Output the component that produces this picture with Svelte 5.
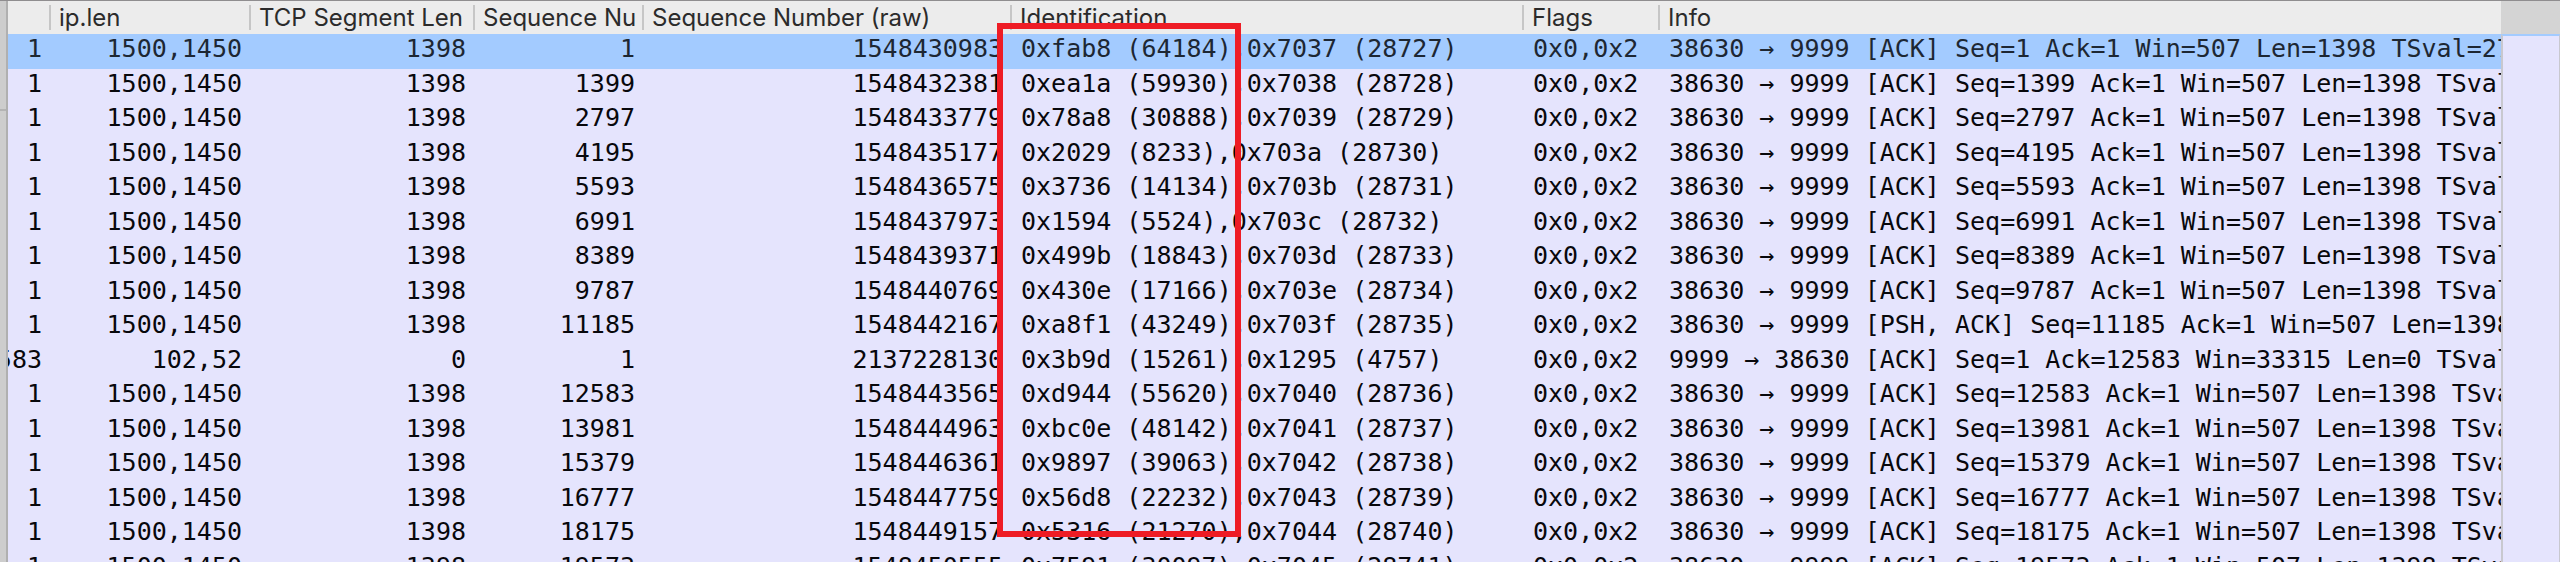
<script lang="ts">
  type Packet = {
    ack: string;
    len: string;
    seg: number;
    seq: number;
    raw: number;
    ident: string;
    info: string;
  };

  const columns = [
    { title: '', cls: 'ack' },
    { title: 'ip.len', cls: 'len' },
    { title: 'TCP Segment Len', cls: 'seg' },
    { title: 'Sequence Nu', cls: 'seq' },
    { title: 'Sequence Number (raw)', cls: 'raw' },
    { title: 'Identification', cls: 'ident' },
    { title: 'Flags', cls: 'flags' },
    { title: 'Info', cls: 'info' },
  ];

  function data(seq: number, ident: string, kind = 'ACK'): Packet {
    return {
      ack: '1',
      len: '1500,1450',
      seg: 1398,
      seq,
      raw: 1548430982 + seq,
      ident,
      info: `38630 → 9999 [${kind}] Seq=${seq} Ack=1 Win=507 Len=1398 TSval=27`,
    };
  }

  const packets: Packet[] = [
    data(1, '0xfab8 (64184),0x7037 (28727)'),
    data(1399, '0xea1a (59930),0x7038 (28728)'),
    data(2797, '0x78a8 (30888),0x7039 (28729)'),
    data(4195, '0x2029 (8233),0x703a (28730)'),
    data(5593, '0x3736 (14134),0x703b (28731)'),
    data(6991, '0x1594 (5524),0x703c (28732)'),
    data(8389, '0x499b (18843),0x703d (28733)'),
    data(9787, '0x430e (17166),0x703e (28734)'),
    data(11185, '0xa8f1 (43249),0x703f (28735)', 'PSH, ACK'),
    {
      ack: '12583',
      len: '102,52',
      seg: 0,
      seq: 1,
      raw: 2137228130,
      ident: '0x3b9d (15261),0x1295 (4757)',
      info: '9999 → 38630 [ACK] Seq=1 Ack=12583 Win=33315 Len=0 TSval=27',
    },
    data(12583, '0xd944 (55620),0x7040 (28736)'),
    data(13981, '0xbc0e (48142),0x7041 (28737)'),
    data(15379, '0x9897 (39063),0x7042 (28738)'),
    data(16777, '0x56d8 (22232),0x7043 (28739)'),
    data(18175, '0x5316 (21270),0x7044 (28740)'),
    data(19573, '0x7591 (30097),0x7045 (28741)'),
  ];

  let selected = $state(0);
</script>

<main class="window">
  <div class="edge"></div>

  <div class="list">
    <table>
      <colgroup>
        {#each columns as col}
          <col class={col.cls} />
        {/each}
      </colgroup>
      <thead>
        <tr>
          {#each columns as col}
            <th scope="col"><div class="title">{col.title}</div></th>
          {/each}
        </tr>
      </thead>
      <tbody>
        {#each packets as p, i}
          <tr class:selected={selected === i} onclick={() => (selected = i)}>
            <td><div class="cell num">{p.ack}</div></td>
            <td><div class="cell num">{p.len}</div></td>
            <td><div class="cell num">{p.seg}</div></td>
            <td><div class="cell num">{p.seq}</div></td>
            <td><div class="cell num">{p.raw}</div></td>
            <td><div class="cell">{p.ident}</div></td>
            <td><div class="cell">0x0,0x2</div></td>
            <td><div class="cell">{p.info}</div></td>
          </tr>
        {/each}
      </tbody>
    </table>
    <div class="marker"></div>
  </div>

  <div class="minimap">
    <div class="minimap-head"></div>
    <div class="minimap-body"></div>
  </div>
</main>

<style>
  :global(body) { margin: 0; }

  .window {
    display: flex;
    box-sizing: border-box;
    height: 100vh;
    overflow: hidden;
    border-top: 1px solid #8f8d8f;
    background: #e5e4fd;
  }

  .edge {
    box-sizing: border-box;
    flex: 0 0 8px;
    border-right: 2px solid #b0b0b0;
    background: linear-gradient(#cdcdcd 108px, #b4b4b4 108px, #b4b4b4 110px, #cdcdcd 110px);
  }

  .list {
    position: relative;
    flex: 1;
    min-width: 0;
    overflow: hidden;
  }

  table {
    width: 100%;
    table-layout: fixed;
    border-collapse: collapse;
  }
  .ack { width: 43px; }
  .len { width: 200px; }
  .seg { width: 224px; }
  .seq { width: 169px; }
  .raw { width: 368px; }
  .ident { width: 512px; }
  .flags { width: 136px; }

  th, td { padding: 0; }

  thead tr {
    height: 33px;
    background: #ececec;
  }
  .title {
    box-sizing: border-box;
    height: 25px;
    padding-left: 8px;
    border-right: 2px solid #c6c6c6;
    color: #2b2b2b;
    font: 400 24px/25px Inter, "Liberation Sans", sans-serif;
    text-align: left;
    white-space: nowrap;
  }
  th:last-child .title { border-right: 0; }

  /* rows average 34.5px, so they alternate */
  tbody tr { height: 34px; }
  tbody tr:nth-child(odd) { height: 35px; }

  .cell {
    display: flex;
    padding: 0 9px;
    overflow: hidden;
    color: #08080c;
    font: 25px/30px "DejaVu Sans Mono", "Liberation Mono", monospace;
    white-space: pre;
  }
  .num {
    justify-content: flex-end;
    padding-left: 0;
  }
  td { vertical-align: top; }
  td:last-child .cell { padding-right: 0; }

  .selected { background: #a3cbff; }
  .selected .cell { color: #1d2733; }

  .marker {
    position: absolute;
    top: 22px;
    left: 989px;
    box-sizing: border-box;
    width: 244px;
    height: 514px;
    border: 6px solid #ee1c25;
    pointer-events: none;
  }

  .minimap {
    display: flex;
    flex-direction: column;
    flex: 0 0 59px;
  }
  .minimap-head {
    height: 33px;
    background: #d4d4d4;
  }
  .minimap-body {
    flex: 1;
    border: 1px solid #c8c8cf;
    border-width: 2px 1px 0 2px;
    border-top-color: #a3cbff;
  }
</style>
